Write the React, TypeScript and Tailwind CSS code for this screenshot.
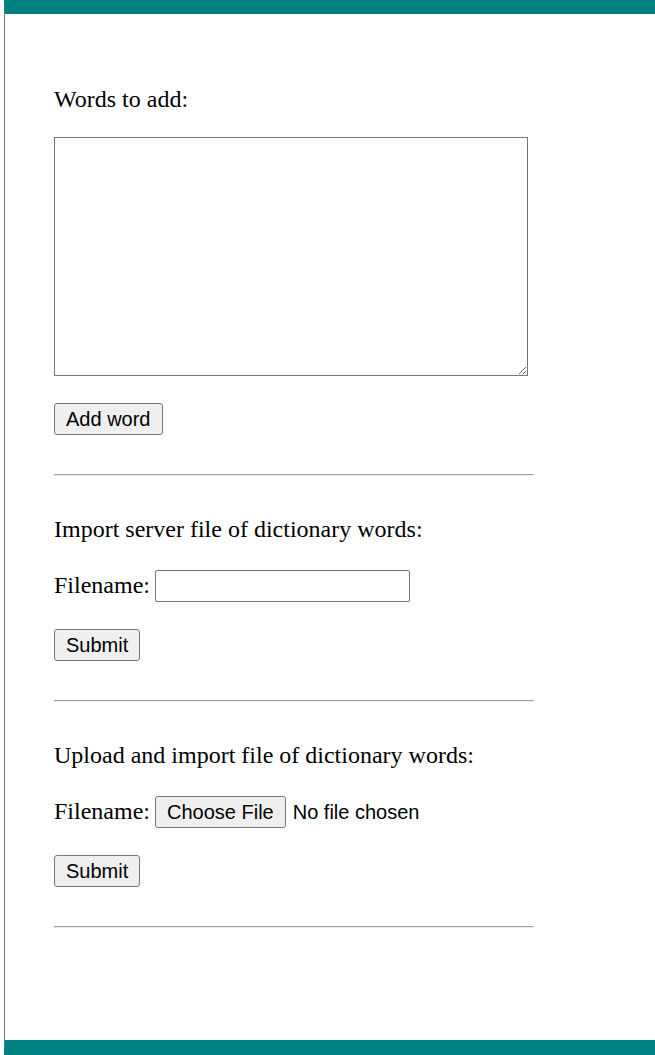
import React from "react";

const serif = "font-['Liberation_Serif','Times_New_Roman',serif] text-[24px] leading-[27px] text-black";
const sans = "font-['Liberation_Sans',Arial,sans-serif] text-[20px] text-black";
const btn = `${sans} h-[32px] px-[11px] bg-[#efefef] border border-[#767676] rounded-[3px] leading-none`;

function Rule({ className = "" }: { className?: string }) {
  return (
    <div
      className={`w-[480px] h-[2px] border-t border-l border-t-[#a0a0a0] border-l-[#a0a0a0] border-b border-r border-b-[#eeeeee] border-r-[#eeeeee] ${className}`}
    />
  );
}

export default function App() {
  return (
    <div className="min-h-[1055px] ml-[4px] flex flex-col border-l border-l-[#7a7a7a] border-t-[14px] border-t-[#008080] border-b-[15px] border-b-[#008080] bg-white">
      <div className="flex flex-col items-start pl-[49px] pt-[72px]">
        {/* Words */}
        <p className={serif}>Words to add:</p>
        <textarea className="mt-[24px] w-[474px] h-[239px] border border-[#767676] bg-white resize-y" />
        <button className={`${btn} mt-[27px]`}>Add word</button>
        <Rule className="mt-[39px]" />

        {/* Import server file */}
        <p className={`${serif} mt-[40px]`}>Import server file of dictionary words:</p>
        <div className="mt-[27px] flex items-center">
          <span className={`${serif} -mt-[2px]`}>Filename:</span>
          <input
            type="text"
            className="ml-[5px] w-[255px] h-[32px] border border-[#767676] rounded-[2px] bg-white"
          />
        </div>
        <button className={`${btn} mt-[27px]`}>Submit</button>
        <Rule className="mt-[39px]" />

        {/* Upload file */}
        <p className={`${serif} mt-[40px]`}>Upload and import file of dictionary words:</p>
        <div className="mt-[27px] flex items-center">
          <span className={`${serif} -mt-[2px]`}>Filename:</span>
          <button className={`${btn} ml-[5px]`}>Choose File</button>
          <span className={`${sans} ml-[7px]`}>No file chosen</span>
        </div>
        <button className={`${btn} mt-[27px]`}>Submit</button>
        <Rule className="mt-[39px]" />
      </div>
    </div>
  );
}
